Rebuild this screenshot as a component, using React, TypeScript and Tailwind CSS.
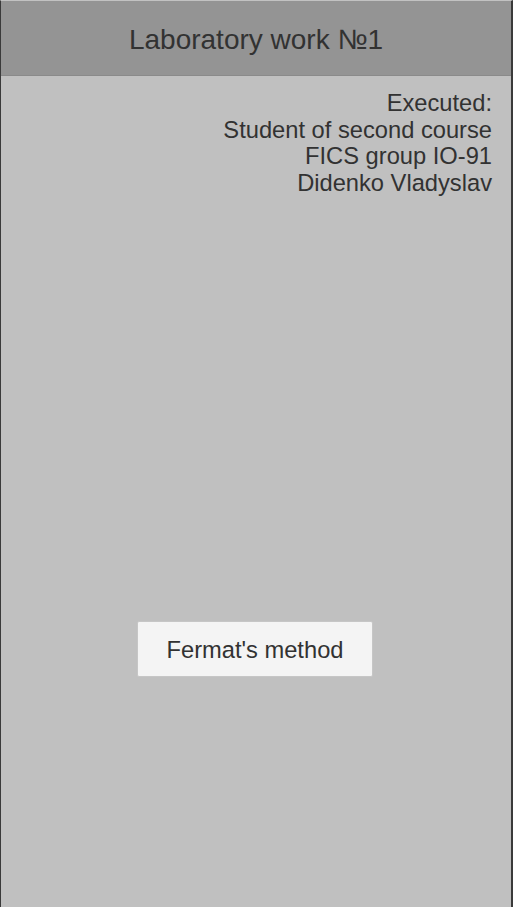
export default function App() {
  return (
    <div
      className="flex h-[907px] w-[513px] flex-col border-l border-r-2 border-t border-l-[#3a3a3a] border-r-[#3a3a3a] border-t-[#c2c2c2] bg-[#c0c0c0] text-[#323232]"
      style={{ fontFamily: '"Liberation Sans", Arial, sans-serif' }}
    >
      {/* Header */}
      <div className="flex h-[75px] shrink-0 items-center justify-center border-b border-[#8a8a8a] bg-[#949494] pt-[4px]">
        <h1 className="text-[28px] leading-none">Laboratory work №1</h1>
      </div>

      {/* Author */}
      <div className="mt-[14px] pr-[19px] text-right text-[23.7px] leading-[26.7px]">
        <p>Executed:</p>
        <p>Student of second course</p>
        <p>FICS group IO-91</p>
        <p>Didenko Vladyslav</p>
      </div>

      <div className="mt-[424px] flex justify-center pr-[2px]">
        <button className="h-[56px] w-[236px] shrink-0 rounded-[2px] border border-[#c6c6c6] bg-[#f4f4f4] pt-[3px] text-[23.7px] text-[#323232]">
          Fermat's method
        </button>
      </div>
    </div>
  );
}
